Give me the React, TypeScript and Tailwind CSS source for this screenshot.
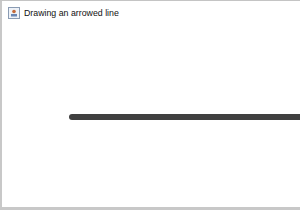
import React from "react";

export default function App() {
  return (
    <div className="w-[300px] h-[210px] bg-white flex flex-col overflow-hidden" style={{ fontFamily: '"Liberation Sans", Arial, sans-serif' }}>
      <div className="h-px bg-[#c4c4c4]" />
      <div className="flex-1 flex">
        <div className="w-[2px] bg-[#c8c8c8]" />
        <div className="flex-1 flex flex-col">
          <div className="h-[24px] flex items-center pl-[6px] gap-[4px]">
            <svg width="12" height="12" viewBox="0 0 12 12">
              <rect x="0.5" y="0.5" width="11" height="11" fill="#eef2f8" stroke="#8a9bb3" />
              <circle cx="6" cy="4.5" r="1.8" fill="#c46a3a" />
              <rect x="3" y="7" width="6" height="2.5" fill="#6a86b3" />
            </svg>
            <span className="text-[8.8px] text-[#111] leading-none">Drawing an arrowed line</span>
          </div>
          <div className="flex-1 relative">
            <div className="absolute left-[67px] right-0 top-[89px] h-[6px] bg-[#404040] rounded-l-full" />
          </div>
        </div>
      </div>
      <div className="h-[3px] bg-[#c8c8c8]" />
    </div>
  );
}
